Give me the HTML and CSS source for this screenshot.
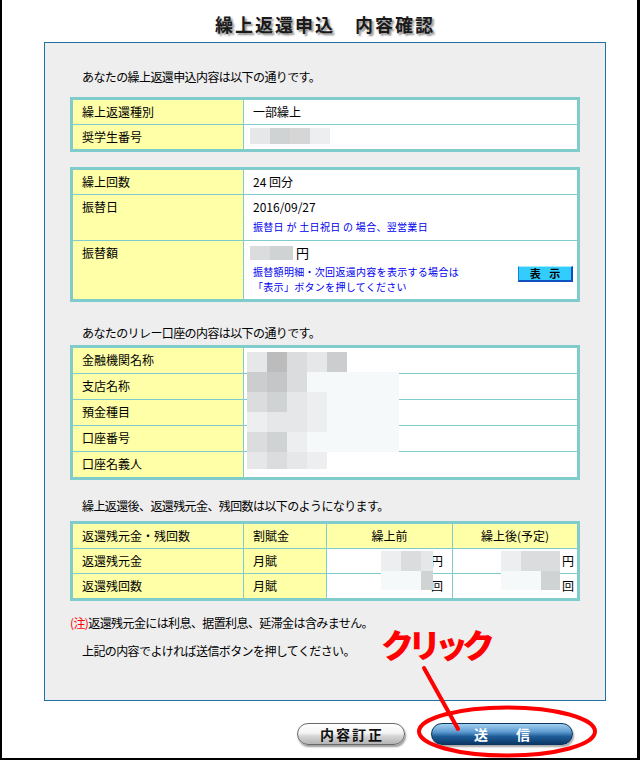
FILE: index.html
```html
<!DOCTYPE html>
<html lang="ja">
<head>
<meta charset="utf-8">
<title>繰上返還申込 内容確認</title>
<link rel="stylesheet" href="styles.css">
</head>
<body>
<div class="screen">
  <h1 class="title">繰上返還申込　内容確認</h1>

  <div class="panel">
    <p class="lead lead-1">あなたの繰上返還申込内容は以下の通りです。</p>

    <table class="info t1">
      <colgroup><col class="c-lbl"><col></colgroup>
      <tr><td class="lbl">繰上返還種別</td><td>一部繰上</td></tr>
      <tr><td class="lbl">奨学生番号</td><td><div class="mask-inline"><span class="k5"></span><span class="k3"></span><span class="k3b"></span><span class="k6"></span></div></td></tr>
    </table>

    <table class="info t2">
      <colgroup><col class="c-lbl"><col></colgroup>
      <tr><td class="lbl">繰上回数</td><td>24 回分</td></tr>
      <tr><td class="lbl">振替日</td><td><div>2016/09/27</div><div class="sub sub-date">振替日 が 土日祝日 の 場合、翌営業日</div></td></tr>
      <tr><td class="lbl">振替額</td><td class="amt">
        <div class="amount-line"><span class="blk k4 w20"></span><span class="blk k3 w23"></span><span class="yen">円</span></div>
        <div class="amt-row">
          <div class="sub sub-amt">振替額明細・次回返還内容を表示する場合は<br>「表示」ボタンを押してください</div>
          <span class="btn-show">表 示</span>
        </div>
      </td></tr>
    </table>

    <p class="lead lead-2">あなたのリレー口座の内容は以下の通りです。</p>

    <div class="masked">
      <table class="info t3">
        <colgroup><col class="c-lbl"><col></colgroup>
        <tr><td class="lbl">金融機関名称</td><td></td></tr>
        <tr><td class="lbl">支店名称</td><td></td></tr>
        <tr><td class="lbl">預金種目</td><td></td></tr>
        <tr><td class="lbl">口座番号</td><td></td></tr>
        <tr><td class="lbl">口座名義人</td><td></td></tr>
      </table>
      <div class="mosaic mosaic-acct">
        <span class="k5"></span><span class="k1"></span><span class="k4"></span><span class="k5"></span><span class="k2"></span><span class="k0"></span>
        <span class="k2"></span><span class="k2b"></span><span class="k4"></span><span class="k7"></span><span class="k7"></span><span class="k7"></span>
        <span class="k4"></span><span class="k3"></span><span class="k5"></span><span class="k6"></span><span class="k7"></span><span class="k7"></span>
        <span class="k6"></span><span class="k5"></span><span class="k5"></span><span class="k6"></span><span class="k7"></span><span class="k7"></span>
        <span class="k4"></span><span class="k3"></span><span class="k6"></span><span class="k7"></span><span class="k7"></span><span class="k7"></span>
        <span class="k5"></span><span class="k4"></span><span class="k5"></span><span class="k6"></span><span class="k0"></span><span class="k0"></span>
      </div>
    </div>

    <p class="lead lead-3">繰上返還後、返還残元金、残回数は以下のようになります。</p>

    <div class="masked">
      <table class="info t4">
        <colgroup><col class="c-lbl"><col class="c-kap"><col class="c-pre"><col></colgroup>
        <tr class="head"><td class="lbl">返還残元金・残回数</td><td class="lbl">割賦金</td><td class="lbl ctr">繰上前</td><td class="lbl ctr">繰上後(予定)</td></tr>
        <tr><td class="lbl">返還残元金</td><td class="lbl">月賦</td><td class="num-pre">円</td><td class="num-post">円</td></tr>
        <tr><td class="lbl">返還残回数</td><td class="lbl">月賦</td><td class="num-pre">回</td><td class="num-post">回</td></tr>
      </table>
      <div class="mosaic mosaic-pre">
        <span class="k6"></span><span class="k4"></span><span class="k5"></span>
        <span class="k7"></span><span class="k7"></span><span class="k3"></span>
      </div>
      <div class="mosaic mosaic-post">
        <span class="k6"></span><span class="k4"></span><span class="k4"></span>
        <span class="k7"></span><span class="k7"></span><span class="k3"></span>
      </div>
    </div>

    <p class="note"><span class="red">(注)</span>返還残元金には利息、据置利息、延滞金は含みません。</p>
    <p class="lead lead-4">上記の内容でよければ送信ボタンを押してください。</p>
  </div>

  <div class="actions">
    <button class="btn btn-fix" type="button">内容訂正</button>
    <button class="btn btn-send" type="button">送　　信</button>
  </div>

  <div class="click-label">クリック</div>
  <svg class="annot" width="640" height="760" viewBox="0 0 640 760" aria-hidden="true">
    <line x1="424" y1="668" x2="458" y2="729" stroke="#ff0000" stroke-width="4" stroke-linecap="round"/>
    <ellipse cx="507" cy="731.5" rx="88" ry="24" fill="none" stroke="#ff0000" stroke-width="4"/>
  </svg>
</div>
</body>
</html>
```

FILE: styles.css
```css
* { box-sizing: border-box; }

body {
  margin: 0;
  background: #fff;
  color: #000;
  font-family: "Noto Sans CJK JP", "Noto Sans", sans-serif;
  font-size: 12px;
}

.screen {
  position: relative;
  width: 640px;
  height: 760px;
  border-left: 2px solid #000;
  border-right: 3px solid #000;
  border-bottom: 2px solid #000;
  overflow: hidden;
  background: #fff;
}

.title {
  margin: 0 0 0 42px;
  width: 562px;
  height: 42px;
  padding-top: 12px;
  line-height: 24px;
  font-size: 18px;
  font-weight: 700;
  letter-spacing: 2px;
  text-align: center;
  color: #1a1a1a;
  text-shadow: 2px 2px 2px rgba(0, 0, 0, 0.45);
}

.panel {
  margin-left: 42px;
  width: 562px;
  height: 659px;
  border: 1px solid #2070a8;
  background: #eeeeee;
  padding: 26px 25px 0;
}

.lead {
  margin: 0;
  padding-left: 12px;
  line-height: 16px;
  letter-spacing: -0.6px;
}
.lead-2 { margin-top: 23px; }
.lead-3 { margin-top: 18px; }
.lead-4 { margin-top: 12px; }

.info {
  width: 100%;
  table-layout: fixed;
  border: 3px solid #80cccc;
  border-spacing: 0;
  background: #fff;
}
.info td {
  padding: 5px 9px;
  line-height: 14px;
  vertical-align: top;
  border-bottom: 1px solid #80cccc;
  white-space: nowrap;
}
.info tr:last-child td { border-bottom: 0; }
.info td + td { border-left: 1px solid #80cccc; }
.info .lbl { background: #ffffa8; }
.info .ctr { text-align: center; }
.c-lbl { width: 170px; }
.c-kap { width: 83px; }
.c-pre { width: 126px; }

.t1 { margin-top: 12px; }
.t2 { margin-top: 15px; }
.masked { position: relative; }
.lead-2 + .masked { margin-top: 4px; }
.lead-3 + .masked { margin-top: 7px; }
.t3 td { padding-bottom: 6px; }

.num-pre { text-align: right; padding-right: 9px !important; }
.num-post { text-align: right; padding-right: 3px !important; }

.sub {
  color: #0000ee;
  font-size: 10px;
  letter-spacing: 0.3px;
}
.sub-date { margin-top: 5px; line-height: 16px; }
.sub-amt { line-height: 15px; }

.amt { padding-right: 4px !important; }
.amount-line {
  display: flex;
  align-items: center;
  height: 14px;
  margin-left: -3px;
}
.blk { display: block; height: 14px; }
.w20 { width: 20px; }
.w23 { width: 23px; }
.yen { margin-left: 3px; font-size: 13px; }
.amt-row {
  display: flex;
  justify-content: space-between;
  align-items: flex-start;
  margin-top: 4px;
}

.btn-show {
  margin-top: 2px;
  width: 55px;
  height: 16px;
  background: #33ccff;
  border-top: 1px solid #a6ecff;
  border-left: 1px solid #1a7fd0;
  border-right: 2px solid #1050c0;
  border-bottom: 2px solid #1050c0;
  font-size: 11px;
  font-weight: 700;
  line-height: 13px;
  text-align: center;
  letter-spacing: 3px;
  padding-left: 3px;
}

.mask-inline {
  display: flex;
  height: 16px;
  margin: -2px 0 0 -3px;
}
.mask-inline span { width: 20px; height: 16px; }

.mosaic { position: absolute; display: grid; }
.mosaic-acct {
  left: 177px;
  top: 7px;
  grid-template-columns: repeat(5, 20px) 52px;
  grid-template-rows: repeat(5, 20px) 17px;
}
.mosaic-pre {
  left: 311px;
  top: 30px;
  grid-template-columns: 20px 20px 12px;
  grid-template-rows: 20px 19px;
}
.mosaic-post {
  left: 431px;
  top: 30px;
  grid-template-columns: 20px 20px 19px;
  grid-template-rows: 20px 19px;
}

.k0 { background: transparent; }
.k1 { background: #bcbcbc; }
.k2 { background: #cbcdce; }
.k2b { background: #c4c6c7; }
.k3 { background: #d0d3d4; }
.k3b { background: #d6d6d6; }
.k4 { background: #dadcdd; }
.k5 { background: #e5e7e8; }
.k6 { background: #eceeef; }
.k7 { background: #f6f9fa; }

.note {
  margin: 14px 0 0;
  line-height: 16px;
  letter-spacing: -0.6px;
}
.red { color: #ff0000; }

.actions {
  display: flex;
  gap: 26px;
  margin: 22px 0 0 295px;
}
.btn {
  height: 22px;
  border-radius: 11px;
  padding: 0;
  font-family: "Noto Sans CJK JP", sans-serif;
  font-size: 14px;
  font-weight: 700;
  line-height: 20px;
  text-align: center;
}
.btn-fix {
  width: 108px;
  border: 1px solid #6a6a6a;
  background: linear-gradient(#ffffff, #f4f4f4 45%, #d6d6d6 60%, #b4b4b4);
  box-shadow: 1px 2px 2px rgba(0, 0, 0, 0.4);
  letter-spacing: 2px;
  padding-left: 2px;
  color: #111;
}
.btn-send {
  width: 142px;
  border: 1px solid #0c355f;
  background: linear-gradient(#a3d0ef, #5c9ad0 40%, #1f5d98 62%, #0b3866);
  box-shadow: 1px 2px 2px rgba(0, 0, 0, 0.35);
  color: #fff;
}

.click-label {
  position: absolute;
  left: 379px;
  top: 628px;
  font-size: 33px;
  line-height: 33px;
  font-weight: 900;
  letter-spacing: -6px;
  color: #ff0000;
}

.annot {
  position: absolute;
  left: -2px;
  top: 0;
  pointer-events: none;
}
```
